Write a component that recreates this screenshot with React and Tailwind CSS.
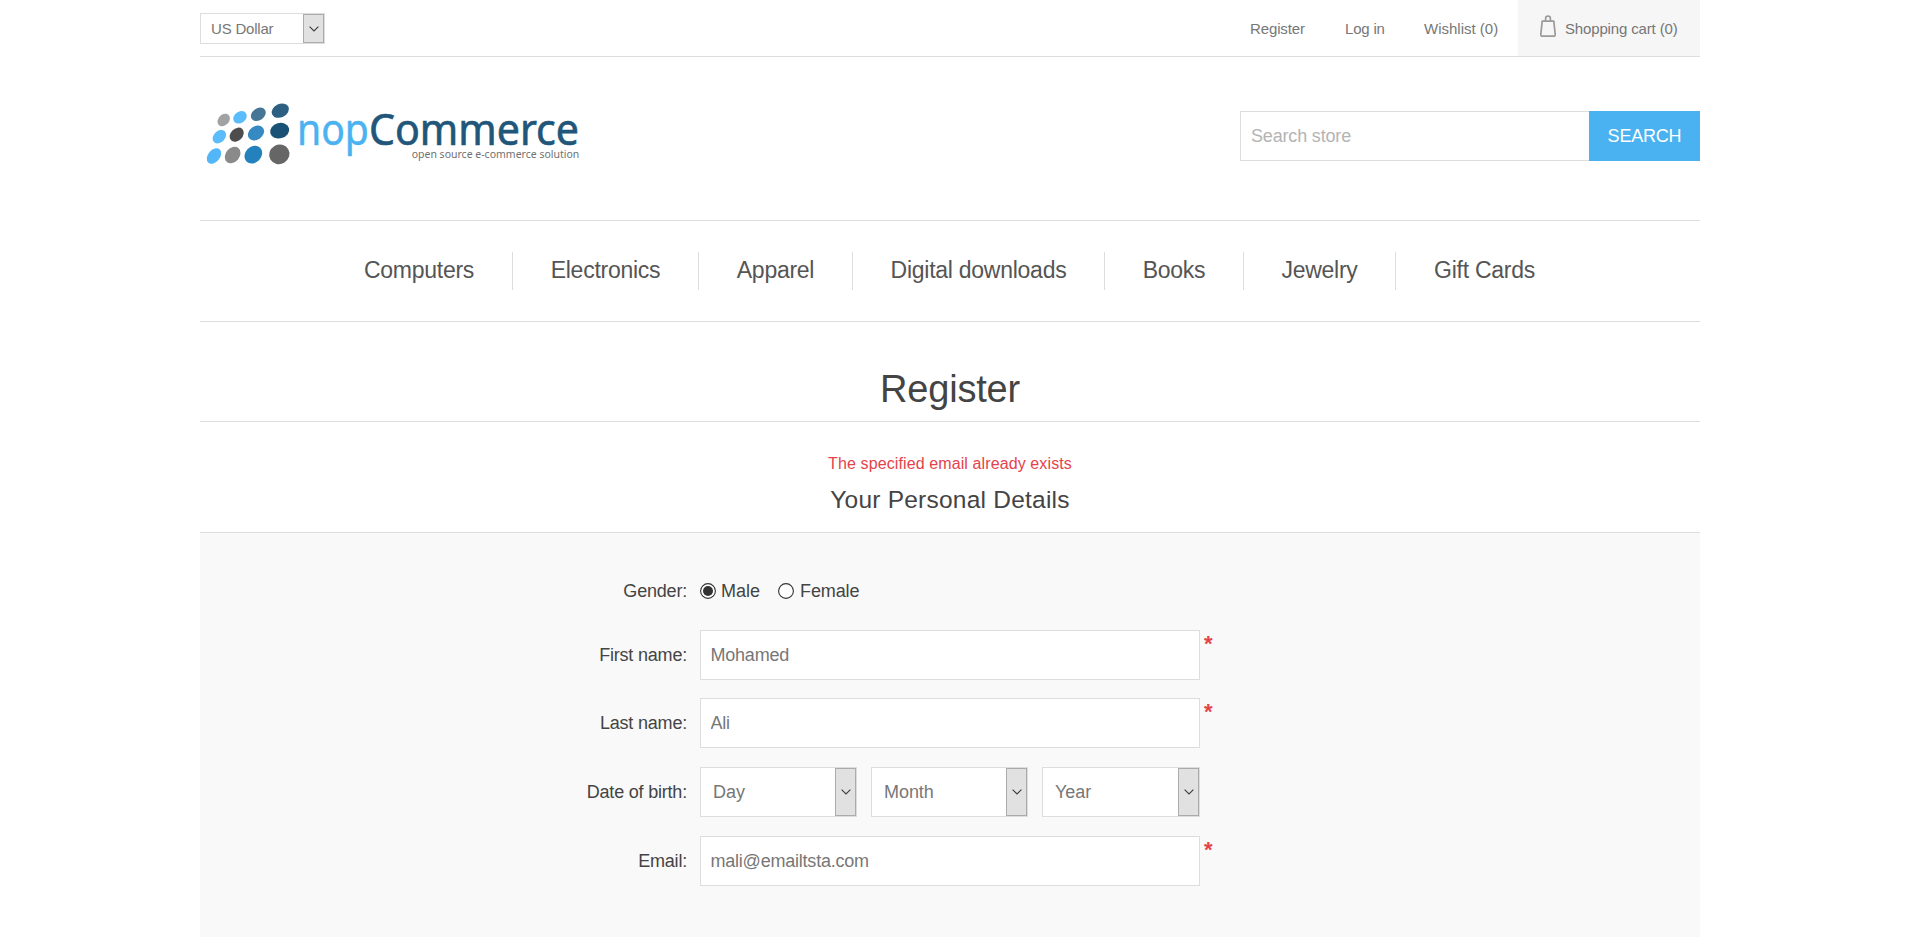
import React from "react";

const navItems = [
  { label: "Computers", cls: "w-[187px] border-r" },
  { label: "Electronics", cls: "w-[186px] border-r" },
  { label: "Apparel", cls: "w-[154px] border-r" },
  { label: "Digital downloads", cls: "w-[252px] border-r" },
  { label: "Books", cls: "w-[139px] border-r" },
  { label: "Jewelry", cls: "w-[152px] border-r" },
  { label: "Gift Cards", cls: "w-[177px]" },
];

const dots = [
  [101, 90, 21, 16, -45, "#a0a2a4"],
  [150, 82, 22, 17, -35, "#5bbcfb"],
  [205, 73, 24, 18, -35, "#467595"],
  [271, 62, 27, 20, -25, "#2c5f82"],
  [88, 140, 23, 17, -45, "#5bbcfb"],
  [140, 134, 24, 18, -45, "#4d4d4d"],
  [198, 129, 26, 20, -35, "#368ac2"],
  [269, 122, 29, 23, -15, "#1a5276"],
  [72, 198, 26, 18, -50, "#52b6f7"],
  [128, 195, 27, 21, -50, "#8a8a8a"],
  [190, 194, 29, 24, -45, "#2382be"],
  [268, 193, 31, 29, -30, "#666666"],
];

function Logo() {
  return (
    <svg className="block h-[90px] w-[400px]" viewBox="30 0 1200 270">
      {dots.map(([cx, cy, rx, ry, rot, fill]) => (
        <ellipse key={`${cx}-${cy}`} cx={cx} cy={cy} rx={rx} ry={ry} fill={fill} transform={`rotate(${rot} ${cx} ${cy})`} />
      ))}
      <g fontFamily="'Noto Sans', sans-serif">
        <text transform="translate(321 165) scale(.895 1)" fontSize="131" fill="#4ab2f1" stroke="#4ab2f1" strokeWidth="1.5">nop</text>
        <text transform="translate(537 165) scale(.942 1)" fontSize="131" fill="#1f5679" stroke="#1f5679" strokeWidth="2">Commerce</text>
        <text transform="translate(665 203) scale(.955 1)" fontSize="33" fill="#707070">open source e-commerce solution</text>
      </g>
    </svg>
  );
}

function Arrow() {
  return (
    <span className="flex w-[21px] shrink-0 items-center border border-[#ababab] bg-[#e1e1e1] pl-[5px]">
      <svg className="h-[6px] w-[10px]" viewBox="0 0 10 6" fill="none" stroke="#3c3c3c" strokeWidth="1.1">
        <path d="M.6 .6 5 5 9.4 .6" />
      </svg>
    </span>
  );
}

function Select({ label, className }) {
  return (
    <button type="button" className={`flex h-[50px] border border-[#dddddd] bg-white text-left text-[#777777] ${className}`}>
      <span className="flex-1 pl-3 leading-[48px] tracking-[-0.05px]">{label}</span>
      <span className="flex h-full"><Arrow /></span>
    </button>
  );
}

function Row({ label, required, className, children }) {
  return (
    <div className={`flex h-[50px] items-center ${className}`}>
      <label className="w-[487px] text-right leading-[50px] tracking-[-0.2px] text-[#444444]">{label}</label>
      <div className="relative ml-[13px] flex w-[500px]">
        {children}
        {required && (
          <span className="absolute top-0 left-[504px] text-[22px] font-bold leading-[27px] text-[#e4434b]">*</span>
        )}
      </div>
    </div>
  );
}

function Field({ value }) {
  return (
    <input
      defaultValue={value}
      className="h-[50px] w-[500px] border border-[#dddddd] bg-white pr-[9px] pl-[9.5px] tracking-[-0.22px] text-[#777777] outline-none"
    />
  );
}

function Radio({ checked }) {
  return (
    <svg className="h-4 w-4" viewBox="0 0 16 16">
      <circle cx="8" cy="8" r="7.4" fill="#ffffff" stroke="#333333" strokeWidth="1.1" />
      {checked && <circle cx="8" cy="8" r="5" fill="#333333" />}
    </svg>
  );
}

export default function App() {
  return (
    <div className="h-[937px] overflow-hidden bg-white pr-5 font-['Liberation_Sans',Arial,sans-serif] text-[18px]">
      <div className="mx-auto w-[1500px]">
        <div className="flex h-[57px] justify-between border-b border-[#dddddd] text-[15px] text-[#777777]">
          <button type="button" className="mt-[13px] flex h-[31px] w-[125px] border border-[#dddddd] text-left">
            <span className="flex-1 pl-[10px] leading-[30px] tracking-[-0.2px]">US Dollar</span>
            <span className="flex h-full"><Arrow /></span>
          </button>
          <div className="flex leading-[57px]">
            <a className="w-[95px] pl-[1px] tracking-[-0.12px]">Register</a>
            <a className="w-[79px] pl-[1px] tracking-[-0.2px]">Log in</a>
            <a className="w-[95px] pl-[1px]">Wishlist (0)</a>
            <a className="flex w-[182px] bg-[#f6f6f6] pl-[22px]">
              <svg className="mt-[15px] h-[22px] w-[16px]" viewBox="0 0 16 22" fill="none" stroke="#9a9a9a" strokeWidth="1.7">
                <path d="M2.2 6.2h11.6l1.4 13.1q.1 1.9-1.4 1.9H2.2q-1.5 0-1.4-1.9z" strokeLinejoin="round" />
                <path d="M5.6 6V3.4q0-2.3 2.4-2.3t2.4 2.3V6" />
              </svg>
              <span className="pl-[9px] tracking-[-0.15px]">Shopping cart (0)</span>
            </a>
          </div>
        </div>

        <div className="flex h-[163px] justify-between">
          <div className="pt-[33px]"><Logo /></div>
          <div className="mt-[54px] flex h-[50px]">
            <input
              placeholder="Search store"
              className="w-[349px] border border-r-0 border-[#dddddd] px-[10px] tracking-[-0.17px] outline-none placeholder:text-[#b4b4b4]"
            />
            <button type="button" className="w-[111px] bg-[#4ab2f1] tracking-[-0.2px] text-white">SEARCH</button>
          </div>
        </div>

        <nav className="flex h-[102px] border-y border-[#dddddd] pt-[31px] pl-[126px]">
          {navItems.map((n) => (
            <a key={n.label} className={`h-[38px] border-[#dddddd] text-center text-[23px] leading-[37px] tracking-[-0.26px] text-[#555555] ${n.cls}`}>
              {n.label}
            </a>
          ))}
        </nav>

        <h1 className="h-[100px] border-b border-[#dddddd] pt-[44px] text-center text-[38px] leading-[46px] tracking-[-0.2px] text-[#444444]">Register</h1>

        <div className="h-[111px] border-b border-[#dddddd] pt-[31px] text-center">
          <div className="text-[16px] leading-[22px] tracking-[0.11px] text-[#e4434b]">The specified email already exists</div>
          <h2 className="pt-[9px] text-[24.5px] leading-[32px] tracking-[0.23px] text-[#444444]">Your Personal Details</h2>
        </div>

        <div className="h-[404px] bg-[#f9f9f9] pt-[33px]">
          <Row label="Gender:">
            <div className="flex items-center leading-[50px] text-[#444444]">
              <Radio checked />
              <span className="w-[62px] pl-[5px]">Male</span>
              <Radio />
              <span className="pl-[6px] tracking-[-0.1px]">Female</span>
            </div>
          </Row>
          <Row label="First name:" required className="mt-[14px]"><Field value="Mohamed" /></Row>
          <Row label="Last name:" required className="mt-[18px]"><Field value="Ali" /></Row>
          <Row label="Date of birth:" className="mt-[19px]">
            <div className="flex gap-[14px]">
              <Select label="Day" className="w-[157px]" />
              <Select label="Month" className="w-[157px]" />
              <Select label="Year" className="w-[158px]" />
            </div>
          </Row>
          <Row label="Email:" required className="mt-[19px]"><Field value="mali@emailtsta.com" /></Row>
        </div>
      </div>
    </div>
  );
}
